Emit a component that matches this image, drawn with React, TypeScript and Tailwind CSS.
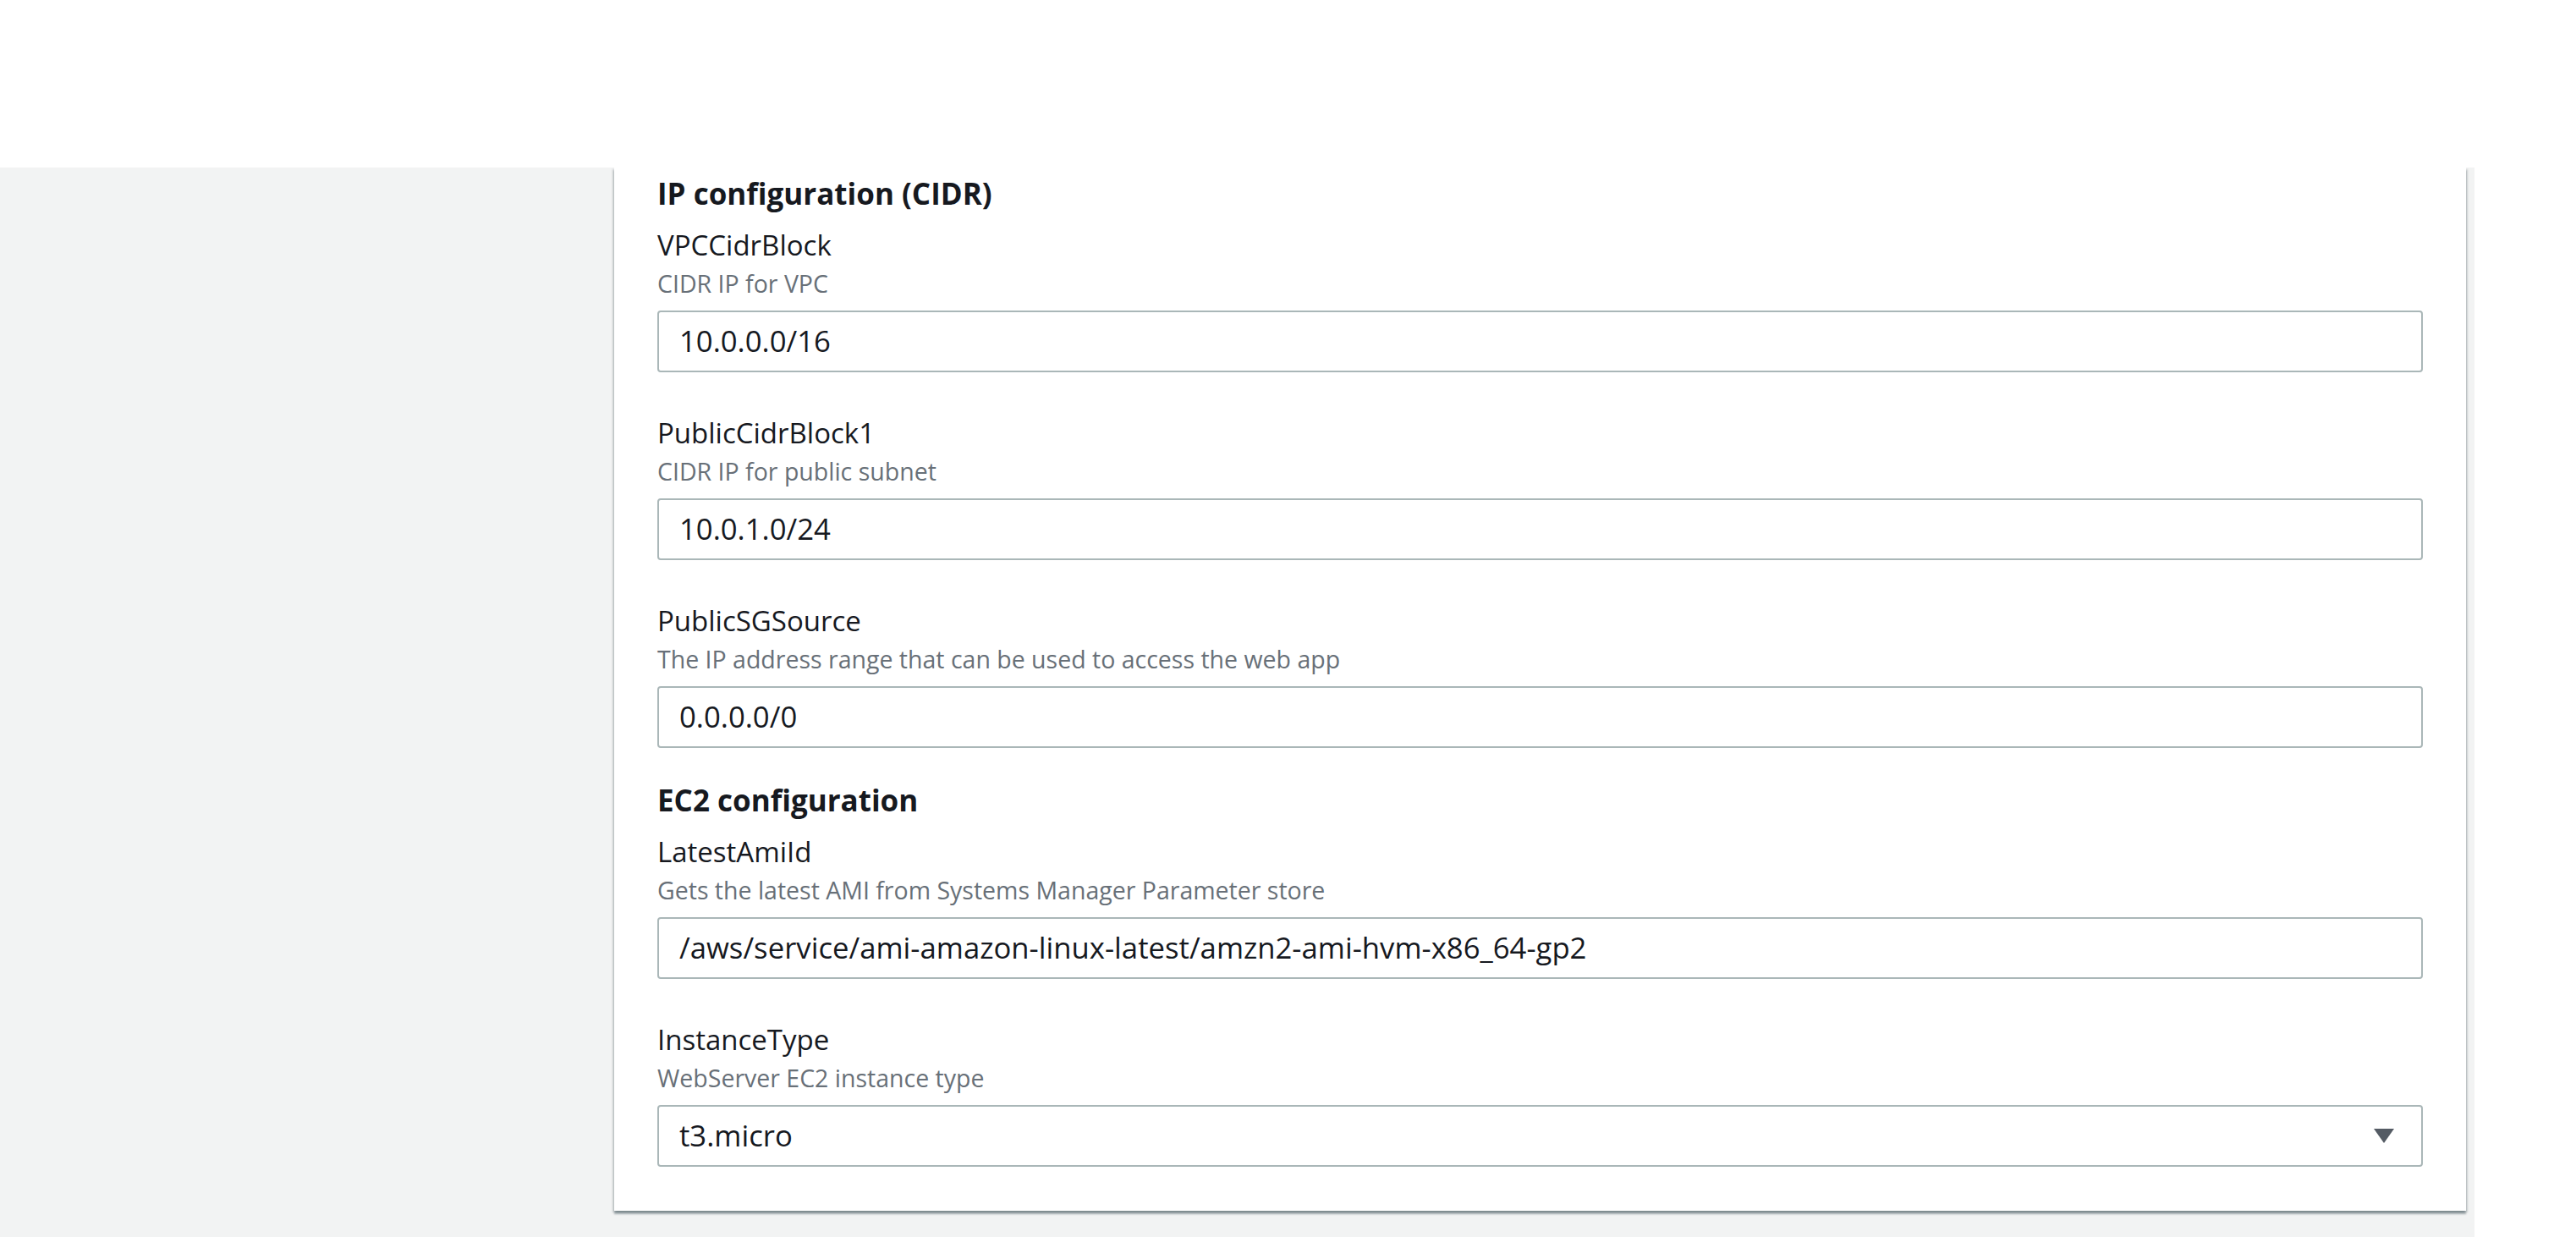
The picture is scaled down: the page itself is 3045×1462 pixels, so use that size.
const FONT = "font-['Open_Sans',_'Noto_Sans',_sans-serif]";

type Field = {
    name: string;
    hint: string;
    value: string;
    select?: boolean;
};

const IP_FIELDS: Field[] = [
    { name: "VPCCidrBlock", hint: "CIDR IP for VPC", value: "10.0.0.0/16" },
    { name: "PublicCidrBlock1", hint: "CIDR IP for public subnet", value: "10.0.1.0/24" },
    { name: "PublicSGSource", hint: "The IP address range that can be used to access the web app", value: "0.0.0.0/0" },
];

const EC2_FIELDS: Field[] = [
    { name: "LatestAmiId", hint: "Gets the latest AMI from Systems Manager Parameter store", value: "/aws/service/ami-amazon-linux-latest/amzn2-ami-hvm-x86_64-gp2" },
    { name: "InstanceType", hint: "WebServer EC2 instance type", value: "t3.micro", select: true },
];

function ParamField({ field, last }: { field: Field; last?: boolean }) {
    return (
        <div className={last ? "" : "mb-[50px]"}>
            <div className="h-[44px] leading-[44px] text-[33px] text-[#16191f]">{field.name}</div>
            <div className="h-[46px] leading-[46px] text-[28.5px] text-[#687078]">{field.hint}</div>
            <div className="mt-[9px] h-[73px] flex items-center justify-between rounded-[4px] border-2 border-[#aab7b8] bg-white pl-[24px] pr-[31px]">
                <span className="text-[34.7px] text-[#16191f] whitespace-nowrap">{field.value}</span>
                {field.select && (
                    <svg width="26" height="19" viewBox="0 0 26 19" className="shrink-0">
                        <path d="M1 1 L25 1 L13 18 Z" fill="#545b64" />
                    </svg>
                )}
            </div>
        </div>
    );
}

function Section({ title, fields, first }: { title: string; fields: Field[]; first?: boolean }) {
    return (
        <div className={first ? "" : "mt-[39px]"}>
            <h3 className="h-[46px] leading-[46px] text-[35px] font-bold text-[#16191f] mb-[16px]">{title}</h3>
            {fields.map((f, i) => (
                <ParamField key={f.name} field={f} last={i === fields.length - 1} />
            ))}
        </div>
    );
}

export default function App() {
    return (
        <div className={`w-[3045px] h-[1462px] bg-white flex flex-col overflow-hidden ${FONT}`}>
            {/* page header area, blank */}
            <div className="h-[198px] shrink-0 bg-white" />

            <div className="flex flex-1 min-h-0">
                <div className="w-[2925px] bg-[#f2f3f3] flex pl-[726px] pr-[10px] overflow-hidden">
                    {/* parameters card, scrolled so its top is hidden */}
                    <div className="flex-1 self-start bg-white px-[51px] pt-[8px] pb-[52px] shadow-[0_4px_2px_0_rgba(0,28,36,0.3),2px_2px_2px_0_rgba(0,28,36,0.15),-2px_2px_2px_0_rgba(0,28,36,0.15)]">
                        <Section title="IP configuration (CIDR)" fields={IP_FIELDS} first />
                        <Section title="EC2 configuration" fields={EC2_FIELDS} />
                    </div>
                </div>
                <div className="flex-1 bg-white" />
            </div>
        </div>
    );
}
